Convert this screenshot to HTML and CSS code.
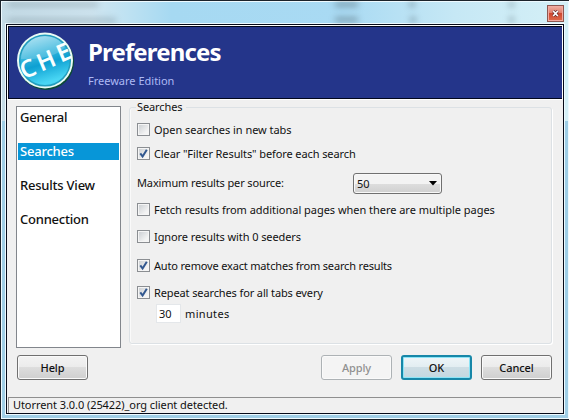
FILE: index.html
```html
<!DOCTYPE html>
<html lang="en">
<head>
  <meta charset="UTF-8">
  <title>Preferences</title>
  <link rel="stylesheet" href="styles.css">
</head>
<body>
  <div class="window">
    <div class="titlebar">
      <div class="ghosts">
        <i class="ghost g1"></i><i class="ghost g2"></i>
        <i class="ghost g3"></i><i class="ghost g4"></i>
        <i class="ghost g5"></i><i class="ghost g6"></i>
        <i class="ghost g7"></i><i class="ghost g8"></i>
      </div>
      <button class="close" aria-label="Close">
        <svg width="7" height="7" viewBox="0 0 7 7"><path d="M1.2 1l4.6 5M5.8 1L1.2 6" stroke="#5a2c2c" stroke-width="2.8"/><path d="M1.2 1l4.6 5M5.8 1L1.2 6" stroke="#fff" stroke-width="1.7"/></svg>
      </button>
    </div>

    <div class="client">
      <div class="header">
        <svg class="logo" width="60" height="60" viewBox="0 0 60 60">
          <defs>
            <linearGradient id="disc" x1="0" y1="0" x2="0.3" y2="1">
              <stop offset="0" stop-color="#b5e6f5"/>
              <stop offset="0.45" stop-color="#35b5dc"/>
              <stop offset="0.65" stop-color="#0da0d2"/>
              <stop offset="1" stop-color="#49d6f4"/>
            </linearGradient>
          </defs>
          <circle cx="30" cy="31" r="28" fill="#0b4a35"/>
          <circle cx="29" cy="29.5" r="28" fill="#e9fbf5"/>
          <circle cx="29" cy="29.5" r="25.3" fill="url(#disc)" stroke="#239dbe" stroke-width="1.5"/>
          <path d="M5 28A24 24 0 0 1 49 16Q38 29 5 28z" fill="#fff" opacity=".18"/>
          <g transform="rotate(-23 29.5 29.5)" class="logo-text">
            <text x="10" y="38.5">C</text>
            <text x="30" y="38">H</text>
            <text x="49.5" y="37.5">E</text>
          </g>
        </svg>
        <div class="heading">
          <h1>Preferences</h1>
          <p>Freeware Edition</p>
        </div>
      </div>

      <div class="content">
        <ul class="pages">
          <li>General</li>
          <li class="selected">Searches</li>
          <li>Results View</li>
          <li>Connection</li>
        </ul>

        <fieldset class="group">
          <legend>Searches</legend>
          <div class="row r1"><span class="check"></span><span class="t-open">Open searches in new tabs</span></div>
          <div class="row r2"><span class="check"><svg viewBox="0 0 11 11"><path d="M2.3 5.3L4.6 8.5 8.8 1.8"/></svg></span><span class="t-clear">Clear "Filter Results" before each search</span></div>
          <div class="row r3">
            <span class="t-max">Maximum results per source:</span>
            <div class="select"><span>50</span><svg width="8" height="5" viewBox="0 0 8 5"><path d="M0 0h8L4 4.5z"/></svg></div>
          </div>
          <div class="row r4"><span class="check"></span><span class="t-fetch">Fetch results from additional pages when there are multiple pages</span></div>
          <div class="row r5"><span class="check"></span><span class="t-ignore">Ignore results with 0 seeders</span></div>
          <div class="row r6"><span class="check"><svg viewBox="0 0 11 11"><path d="M2.3 5.3L4.6 8.5 8.8 1.8"/></svg></span><span class="t-auto">Auto remove exact matches from search results</span></div>
          <div class="row r7"><span class="check"><svg viewBox="0 0 11 11"><path d="M2.3 5.3L4.6 8.5 8.8 1.8"/></svg></span><span class="t-repeat">Repeat searches for all tabs every</span></div>
          <div class="row r8"><span class="number">30</span><span class="t-min">minutes</span></div>
        </fieldset>
      </div>

      <div class="buttons">
        <button class="btn help">Help</button>
        <button class="btn" disabled>Apply</button>
        <button class="btn default">OK</button>
        <button class="btn">Cancel</button>
      </div>

      <div class="status"><span>Utorrent 3.0.0 (25422)_org client detected.</span></div>
    </div>
  </div>
</body>
</html>
```

FILE: styles.css
```css
* {
  box-sizing: border-box;
}

body {
  margin: 0;
  font-family: "Noto Sans", "Open Sans", sans-serif;
  font-size: 11px;
  color: #111;
}

.window {
  display: flex;
  flex-direction: column;
  width: 569px;
  height: 420px;
  padding: 0 4px 5px 5px;
  border: 1px solid #1b232b;
  border-right: 0;
  box-shadow: inset 0 0 0 1px #eefaff;
  overflow: hidden;
  background: linear-gradient(90deg, #c5dce7 0, #cfe5f0 16%, #bfe2f2 22%, #a6d9f2 30%, #a9daf3 60%, #c6e8f5 80%, #d5f0f7 100%) top / 100% 120px no-repeat, #9fcee6;
}

/* Glass title bar with the blurred list behind it */
.titlebar {
  position: relative;
  flex: none;
  display: flex;
  justify-content: flex-end;
  height: 23px;
  padding: 4px 1px 0 0;
}

.close {
  position: relative;
  display: flex;
  align-items: center;
  justify-content: center;
  width: 17px;
  height: 17px;
  padding: 0;
  border: 1px solid #8d5751;
  background: linear-gradient(#f0b0a3, #df7e6d 45%, #ce4830 50%, #df6b4b);
  box-shadow: inset 0 0 0 1px #f1aaa0;
}

.ghost {
  position: absolute;
  height: 5px;
  background: #52666f;
  filter: blur(3px);
  opacity: .5;
}

.g1 { left: 2px; top: 1px; width: 90px; opacity: .3; }
.g2 { left: 2px; top: 17px; width: 108px; opacity: .3; }
.g3 { left: 329px; top: 1px; width: 23px; }
.g4 { left: 329px; top: 16px; width: 23px; }
.g5 { left: 403px; top: 1px; width: 6px; }
.g6 { left: 404px; top: 16px; width: 6px; }
.g7 { left: 503px; top: 1px; width: 5px; }
.g8 { left: 503px; top: 16px; width: 5px; }

.client {
  flex: none;
  display: flex;
  flex-direction: column;
  width: 558px;
  height: 390px;
  border: 1px solid #050a18;
  outline: 1px solid #eefaff;
  background: #f0f0f0;
}

.header {
  display: flex;
  flex: none;
  width: 554px;
  height: 73px;
  margin: 1px 0 0 1px;
  padding-left: 7px;
  border: 1px solid #02071d;
  border-right: 0;
  background: #24358a;
  box-shadow: 0 0 0 1px #fff;
}

.logo {
  flex: none;
  margin-top: 4px;
}

.logo-text {
  font: 600 24px "Noto Sans", sans-serif;
  fill: #f8ffff;
  text-anchor: middle;
}

.heading {
  padding: 9px 0 0 12px;
  white-space: nowrap;
}

h1 {
  margin: 0;
  font-size: 24px;
  line-height: 32px;
  letter-spacing: -0.85px;
  color: #fff;
}

.heading p {
  margin: 5px 0 0;
  line-height: 16px;
  color: #adb9f4;
}

.content {
  display: flex;
  gap: 8px;
  flex: none;
  height: 242px;
  margin: 7px 11px 0 9px;
}

.pages {
  width: 105px;
  margin: 0;
  padding: 2px 1px;
  border: 1px solid #82868c;
  background: #fff;
  list-style: none;
}

.pages li {
  height: 17px;
  margin-bottom: 17px;
  padding-left: 2px;
  font-size: 13px;
  font-weight: 500;
  line-height: 17px;
  letter-spacing: -0.22px;
  white-space: nowrap;
}

.pages .selected {
  background: #0796d8;
  color: #fff;
}

.group {
  flex: 1;
  min-width: 0;
  height: 244px;
  margin: -6px 0 0;
  padding: 0 0 0 7px;
  border: 1px solid #dce1e5;
  border-radius: 3px;
  box-shadow: inset 1px 0 #fafafa, 1px 1px #fff;
}

.group legend {
  margin-left: -1px;
  padding: 0 3px 0 1px;
  line-height: 14px;
  letter-spacing: -0.1px;
}

.row {
  display: flex;
  align-items: center;
  gap: 4px;
  height: 13px;
  white-space: nowrap;
}

.r1 { margin-top: 9px; }
.r2 { margin-top: 11px; }
.r3 { height: 21px; margin-top: 13px; }
.r4 { margin-top: 9px; }
.r5 { margin-top: 14px; }
.r6 { margin-top: 16px; }
.r7 { margin-top: 14px; }
.r8 { height: 19px; margin: 5px 0 0 19px; }

/* Per-label tracking */
.t-open { letter-spacing: -0.04px; }
.t-clear { letter-spacing: -0.1px; }
.t-max { letter-spacing: -0.13px; padding-bottom: 3px; }
.t-fetch { letter-spacing: -0.03px; }
.t-ignore { letter-spacing: -0.09px; }
.t-auto { letter-spacing: -0.17px; }
.t-repeat { letter-spacing: -0.12px; }
.t-min { letter-spacing: 0.35px; }

.check {
  flex: none;
  width: 13px;
  height: 13px;
  border: 1px solid #8b8e92;
  background: linear-gradient(135deg, #c8ccd0, #f4f4f4 75%);
  box-shadow: inset 0 0 0 1px #f5f5f5;
}

.check svg {
  display: block;
  width: 11px;
  height: 11px;
}

.check path {
  fill: none;
  stroke: #31578f;
  stroke-width: 2;
}

.select {
  display: flex;
  align-items: center;
  justify-content: space-between;
  width: 89px;
  height: 21px;
  margin-left: auto;
  margin-right: 109px;
  padding: 0 4px 0 3px;
  border: 1px solid #707070;
  border-radius: 3px;
  background: linear-gradient(#f3f3f3 0 10px, #dddddd 10px, #d0d0d0);
  box-shadow: inset 0 0 0 1px #f8f8f8;
}

.number {
  width: 25px;
  height: 19px;
  padding-left: 2px;
  border: 1px solid #e4e7ea;
  background: #fff;
  line-height: 17px;
}

.buttons {
  display: flex;
  gap: 9px;
  flex: none;
  height: 25px;
  margin: 7px 11px 0 10px;
}

.btn {
  width: 71px;
  padding: 0 0 1px;
  border: 1px solid #707070;
  border-radius: 3px;
  background: linear-gradient(#f3f3f3, #ebebeb 50%, #dddddd 50%, #cfcfcf);
  box-shadow: inset 0 0 0 1px #fafafa;
  font: 500 11px "Noto Sans", sans-serif;
  letter-spacing: -0.1px;
  color: #111;
}

.btn.help {
  margin-right: auto;
}

.btn:disabled {
  border-color: #adb2b5;
  background: #f4f4f4;
  color: #909090;
}

.btn.default {
  border: 2px solid #1787a8;
  background: linear-gradient(#eef5f8, #e2edf1 50%, #cddde4 50%, #c3d8e0);
  box-shadow: inset 0 0 0 1px #8ce4f6;
}

.status {
  flex: none;
  height: 16px;
  margin: 17px 2px 0 1px;
  padding-left: 4px;
  border-top: 1px solid #8f8f8f;
  border-left: 1px solid #8f8f8f;
  line-height: 14px;
  letter-spacing: -0.07px;
  white-space: nowrap;
}
```
